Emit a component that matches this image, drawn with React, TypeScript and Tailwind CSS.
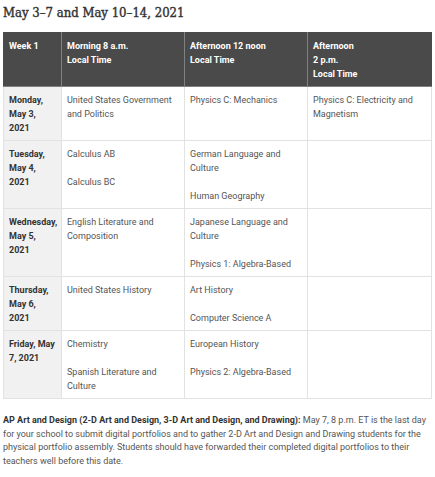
import React from "react";

type Row = { day: string[]; morning: string[]; noon: string[]; two: string[] };

const rows: Row[] = [
  {
    day: ["Monday,", "May 3,", "2021"],
    morning: ["United States Government and Politics"],
    noon: ["Physics C: Mechanics"],
    two: ["Physics C: Electricity and Magnetism"],
  },
  {
    day: ["Tuesday,", "May 4,", "2021"],
    morning: ["Calculus AB", "Calculus BC"],
    noon: ["German Language and Culture", "Human Geography"],
    two: [],
  },
  {
    day: ["Wednesday,", "May 5,", "2021"],
    morning: ["English Literature and Composition"],
    noon: ["Japanese Language and Culture", "Physics 1: Algebra-Based"],
    two: [],
  },
  {
    day: ["Thursday,", "May 6,", "2021"],
    morning: ["United States History"],
    noon: ["Art History", "Computer Science A"],
    two: [],
  },
  {
    day: ["Friday, May 7, 2021"],
    morning: ["Chemistry", "Spanish Literature and Culture"],
    noon: ["European History", "Physics 2: Algebra-Based"],
    two: [],
  },
];

function Paras({ items }: { items: string[] }) {
  return (
    <div className="flex flex-col gap-[14px]">
      {items.map((t) => (
        <p key={t}>{t}</p>
      ))}
    </div>
  );
}

export default function App() {
  return (
    <div
      className="w-[435px] h-[477px] bg-white overflow-hidden pl-[3px] pr-[4px]"
      style={{ fontFamily: "Roboto, 'Liberation Sans', sans-serif" }}
    >
      <h2
        className="pt-[3px] text-[13px] leading-[20px] font-normal font-stretch-condensed text-[#333] [-webkit-text-stroke:0.4px_#333]"
        style={{ fontFamily: "'DejaVu Serif', serif" }}
      >
        May 3–7 and May 10–14, 2021
      </h2>
      <table className="mt-[9px] w-[428px] table-fixed border-collapse text-[9px] leading-[14px]">
        <colgroup>
          <col className="w-[58px]" />
          <col className="w-[123px]" />
          <col className="w-[123px]" />
          <col className="w-[124px]" />
        </colgroup>
        <thead>
          <tr className="bg-[#4a4a4a] text-white font-bold align-top">
            <th className="border border-[#808080] border-t-[#4a4a4a] border-l-[#4a4a4a] px-[5px] pt-[6px] pb-[5px] text-left font-bold">
              Week 1
            </th>
            <th className="border border-[#808080] border-t-[#4a4a4a] px-[5px] pt-[6px] pb-[5px] text-left font-bold">
              Morning 8 a.m.
              <br />
              Local Time
            </th>
            <th className="border border-[#808080] border-t-[#4a4a4a] px-[5px] pt-[6px] pb-[5px] text-left font-bold">
              Afternoon 12 noon
              <br />
              Local Time
            </th>
            <th className="border border-[#808080] border-t-[#4a4a4a] border-r-[#4a4a4a] px-[5px] pt-[6px] pb-[5px] text-left font-bold">
              Afternoon
              <br />
              2 p.m.
              <br />
              Local Time
            </th>
          </tr>
        </thead>
        <tbody>
          {rows.map((r) => (
            <tr key={r.day.join(" ")} className="align-top">
              <td className="border border-[#e2e2e2] bg-[#f1f1f1] px-[5px] pt-[6px] pb-[5px] font-bold text-[#333]">
                {r.day.map((d, i) => (
                  <div key={i}>{d}</div>
                ))}
              </td>
              <td className="border border-[#e2e2e2] px-[5px] pt-[6px] pb-[5px] text-[#555]">
                <Paras items={r.morning} />
              </td>
              <td className="border border-[#e2e2e2] px-[5px] pt-[6px] pb-[5px] text-[#555]">
                <Paras items={r.noon} />
              </td>
              <td className="border border-[#e2e2e2] px-[5px] pt-[6px] pb-[5px] text-[#555]">
                <Paras items={r.two} />
              </td>
            </tr>
          ))}
        </tbody>
      </table>
      <p className="mt-[15px] text-[9px] leading-[13.5px] text-[#555]">
        <span className="font-bold text-[#333]">
          AP Art and Design (2-D Art and Design, 3-D Art and Design, and Drawing):
        </span>{" "}
        May 7, 8 p.m. ET is the last day for your school to submit digital portfolios and to gather 2-D Art and
        Design and Drawing students for the physical portfolio assembly. Students should have forwarded their
        completed digital portfolios to their teachers well before this date.
      </p>
    </div>
  );
}
